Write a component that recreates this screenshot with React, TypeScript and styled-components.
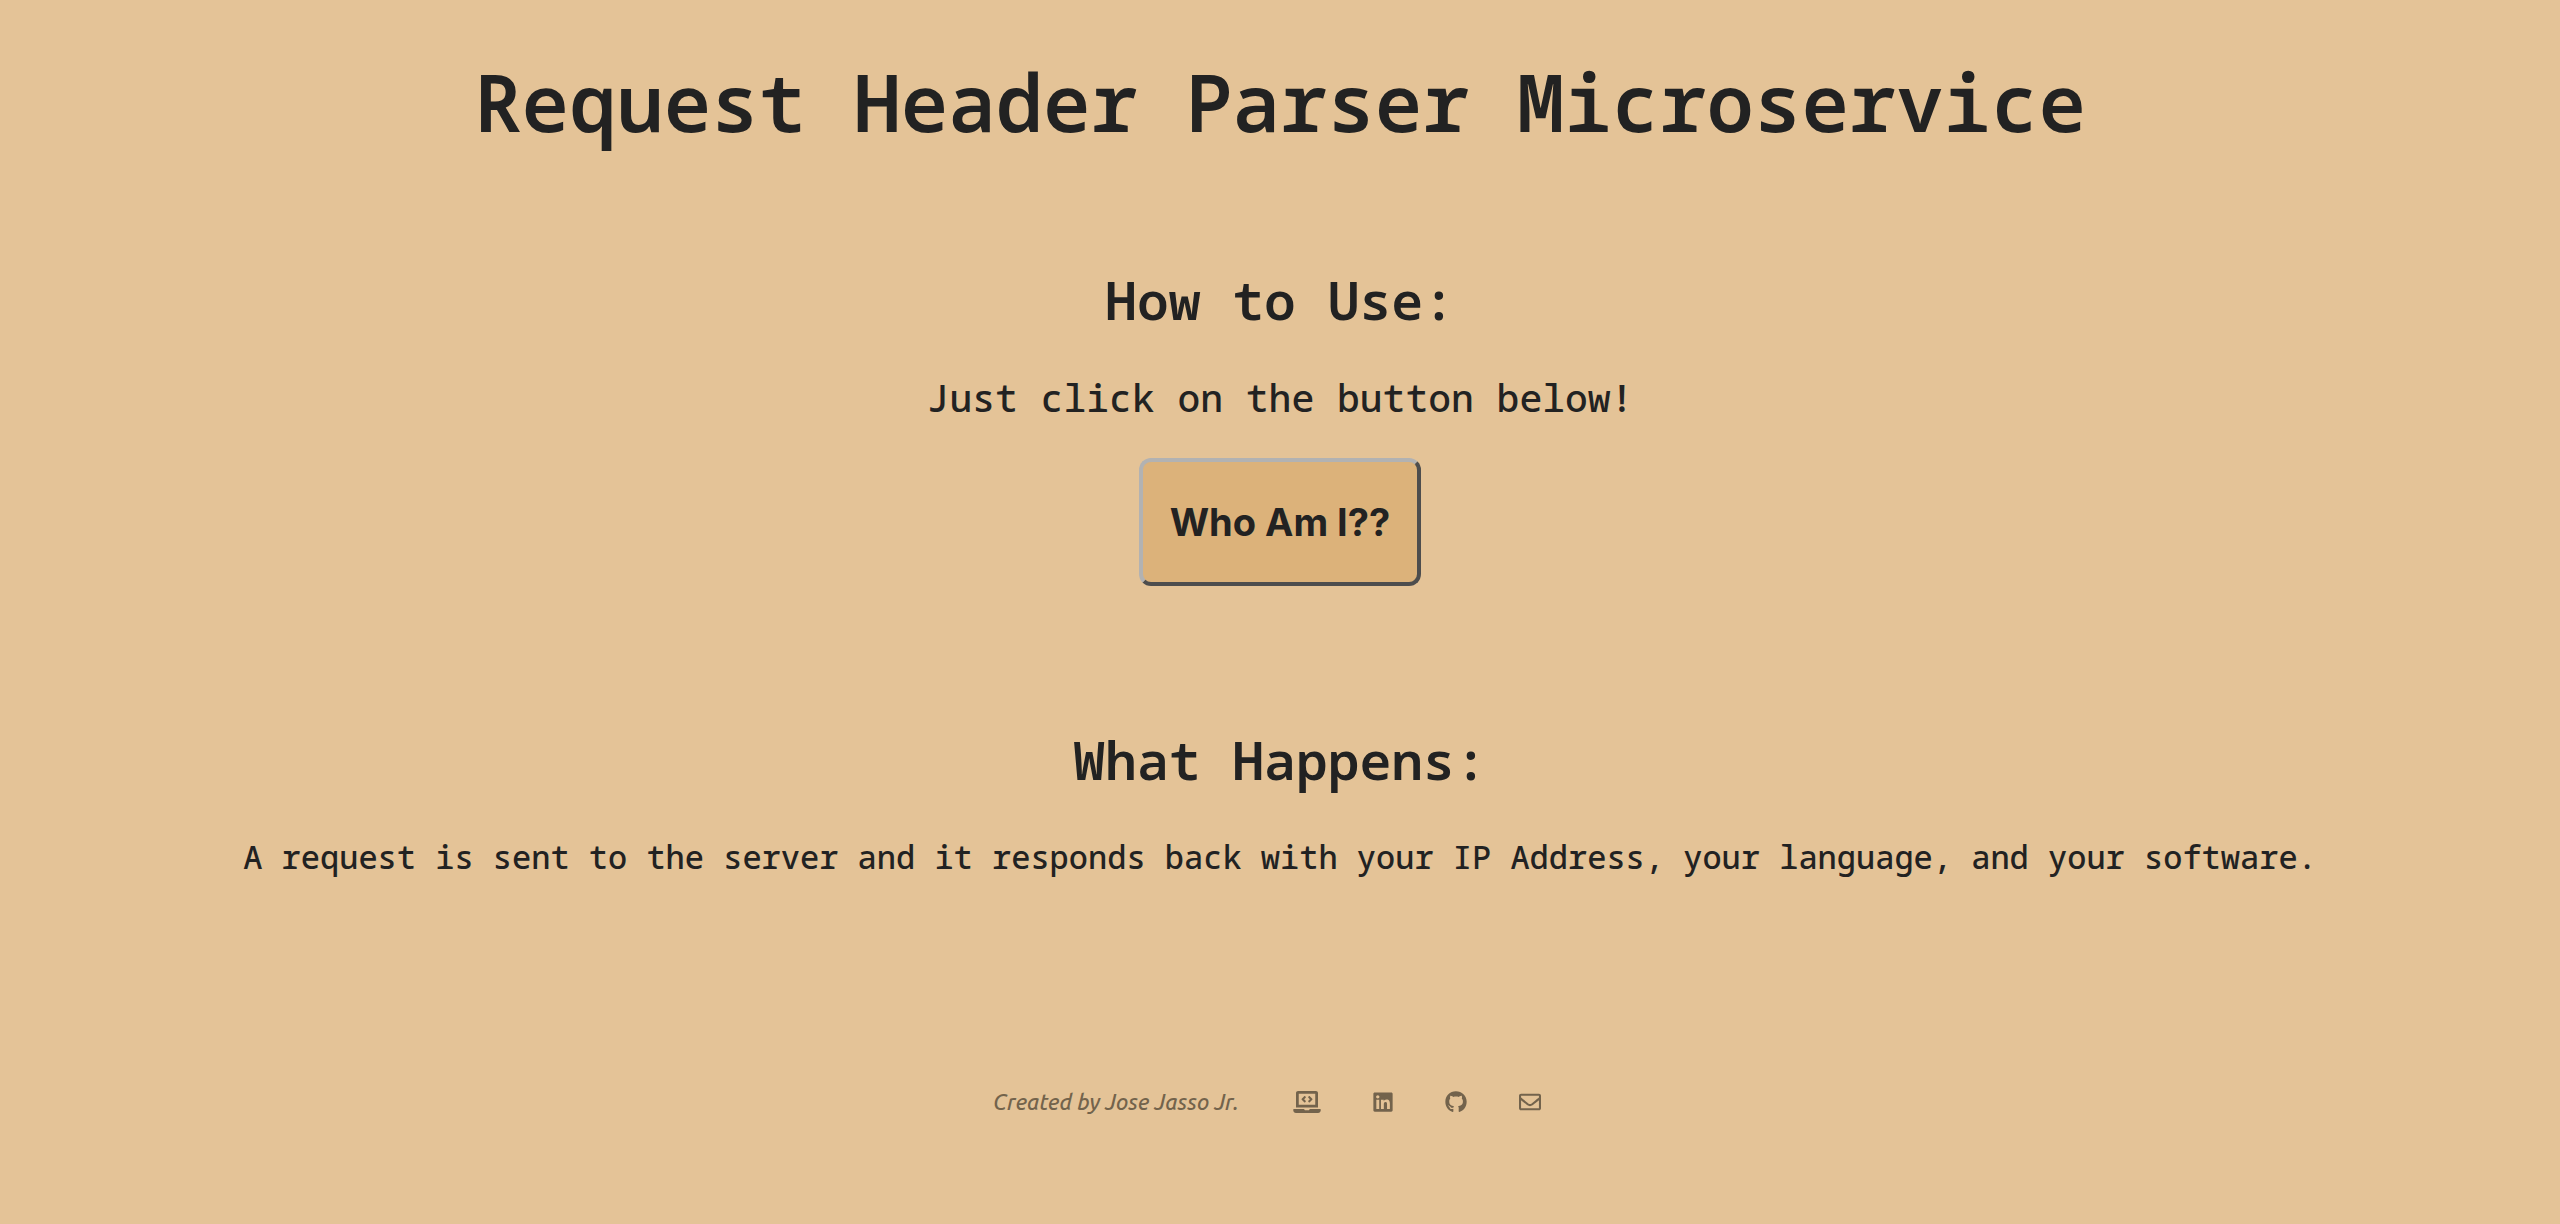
import React from "react";
import styled, { createGlobalStyle } from "styled-components";
import { FaGithub, FaLaptopCode, FaLinkedin, FaRegEnvelope } from "react-icons/fa";

const GlobalStyle = createGlobalStyle`
  *, *::before, *::after {
    box-sizing: border-box;
  }
  body {
    margin: 0;
    background: #e4c397;
    color: #222222;
    font-family: "Noto Sans Mono", "DejaVu Sans Mono", monospace;
    font-weight: 500;
  }
`;

const Page = styled.div`
  display: flex;
  flex-direction: column;
  align-items: center;
  padding: 54px 24px 96px;
  text-align: center;
`;

const Title = styled.h1`
  margin: 0 0 118px;
  font-size: 79px;
  font-weight: 600;
  line-height: 96px;
`;

const Main = styled.main`
  display: flex;
  flex-direction: column;
  align-items: center;
  gap: 142px;
`;

const Section = styled.section`
  display: flex;
  flex-direction: column;
  align-items: center;
`;

const Heading = styled.h2`
  margin: 0 0 37px;
  font-size: 53px;
  font-weight: 600;
  line-height: 64px;
`;

const Text = styled.p<{ $large?: boolean }>`
  margin: 0;
  font-size: ${({ $large }) => ($large ? "38px" : "32px")};
  line-height: 56px;
`;

const WhoButton = styled.button`
  margin-top: 33px;
  padding: 32px 27px;
  border: 4px solid;
  border-color: #b2b2b2 #4d4d4d #4d4d4d #b2b2b2;
  border-radius: 12px;
  background: #dcb27a;
  color: inherit;
  font-family: Inter, "Liberation Sans", sans-serif;
  font-size: 38px;
  font-weight: 700;
  line-height: 56px;
  cursor: pointer;
`;

const Footer = styled.footer`
  display: flex;
  align-items: center;
  margin-top: 201px;
  color: #73634c;
`;

const Credit = styled.span`
  margin-right: 28px;
  font-family: Ubuntu, "Noto Sans", sans-serif;
  font-size: 22px;
  font-style: italic;
  line-height: 32px;
`;

const IconLink = styled.a<{ $width: number }>`
  display: flex;
  padding: 0 26px;
  color: inherit;

  svg {
    width: ${({ $width }) => $width}px;
    height: 22px;
  }
`;

const links = [
  { label: "Portfolio", href: "#portfolio", Icon: FaLaptopCode, width: 28 },
  { label: "LinkedIn", href: "#linkedin", Icon: FaLinkedin, width: 20 },
  { label: "GitHub", href: "#github", Icon: FaGithub, width: 22 },
  { label: "Email", href: "#email", Icon: FaRegEnvelope, width: 22 },
];

export default function App() {
  return (
    <Page>
      <GlobalStyle />
      <Title>Request Header Parser Microservice</Title>
      <Main>
        <Section>
          <Heading>How to Use:</Heading>
          <Text $large>Just click on the button below!</Text>
          <WhoButton type="button">Who Am I??</WhoButton>
        </Section>
        <Section>
          <Heading>What Happens:</Heading>
          <Text>
            A request is sent to the server and it responds back with your IP Address, your
            language, and your software.
          </Text>
        </Section>
      </Main>
      <Footer>
        <Credit>Created by Jose Jasso Jr.</Credit>
        {links.map(({ label, href, Icon, width }) => (
          <IconLink key={label} href={href} aria-label={label} $width={width}>
            <Icon />
          </IconLink>
        ))}
      </Footer>
    </Page>
  );
}
